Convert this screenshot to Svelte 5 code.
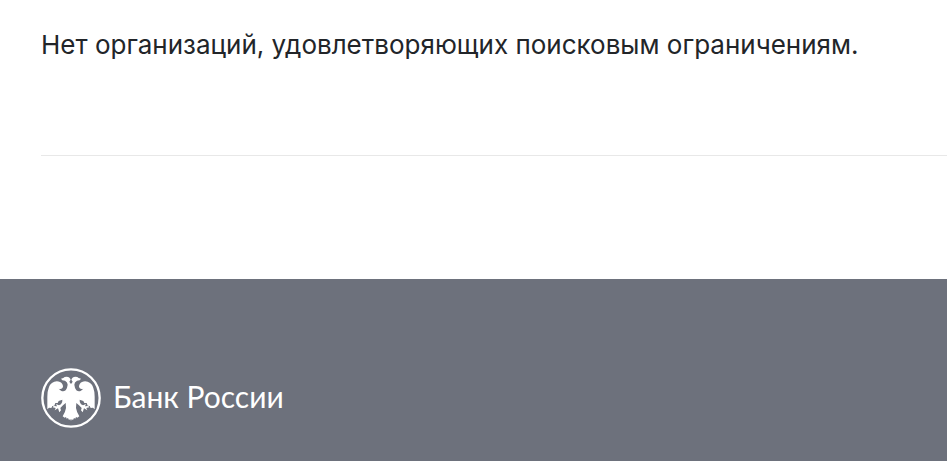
<script>
  const message = 'Нет организаций, удовлетворяющих поисковым ограничениям.';
  const bankName = 'Банк России';
</script>

<main class="results">
  <p class="message">{message}</p>
  <hr class="divider" />
</main>

<footer class="footer">
  <a class="logo" href="/">
    <svg class="emblem" viewBox="15 12 180 180" aria-hidden="true">
      <circle cx="105" cy="102" r="86" fill="none" stroke="currentColor" stroke-width="7" />
      <g fill="currentColor">
        <path id="eagle-half" d="M106 59 L104 59 L100 53 L104 47 Q101 38 92 38 Q85 38 82 42 L75 44 L79 49 L87 50 Q95 54 95 62 Q94 72 89 79 Q82 84 75 80 L68 74 Q78 77 81 69 Q81 58 72 54 Q64 50 55 53 Q42 57 38 72 Q34 82 34 98 L34 136 L39 131 L46 132 L49 126 L55 125 L58 117 L65 117 L68 111 L79 107 Q80 115 75 121 L69 124 L60 120 L63 127 L53 126 L50 130 L59 132 L56 139 L66 133 L70 145 L75 139 L73 132 L81 124 L89 117 L90 132 Q88 145 80 157 L86 161 L90 159 L92 164 L96 162 L99 168 L103 165 L106 170 Z" />
        <use href="#eagle-half" transform="translate(210 0) scale(-1 1)" />
      </g>
    </svg>
    <span class="name">{bankName}</span>
  </a>
</footer>

<style>
  :global(body) {
    margin: 0;
    background: #fff;
  }
  .results {
    padding: 24px 0 0 41px;
  }
  .message {
    margin: 0;
    font-family: Inter, 'Liberation Sans', sans-serif;
    font-size: 26px;
    line-height: 42px;
    color: #222529;
  }
  .divider {
    margin: 89px 0 0;
    border: 0;
    border-top: 1px solid #e8e8e8;
  }
  .footer {
    margin-top: 123px;
    padding: 89px 41px 33px;
    background: #6d717c;
  }
  .logo {
    display: inline-flex;
    align-items: center;
    gap: 12px;
    color: #fff;
    text-decoration: none;
    vertical-align: top;
  }
  .emblem {
    display: block;
    width: 60px;
    height: 60px;
  }
  .name {
    padding-bottom: 4px;
    font-family: Lato, 'Open Sans', sans-serif;
    font-size: 30px;
    line-height: 36px;
  }
</style>
